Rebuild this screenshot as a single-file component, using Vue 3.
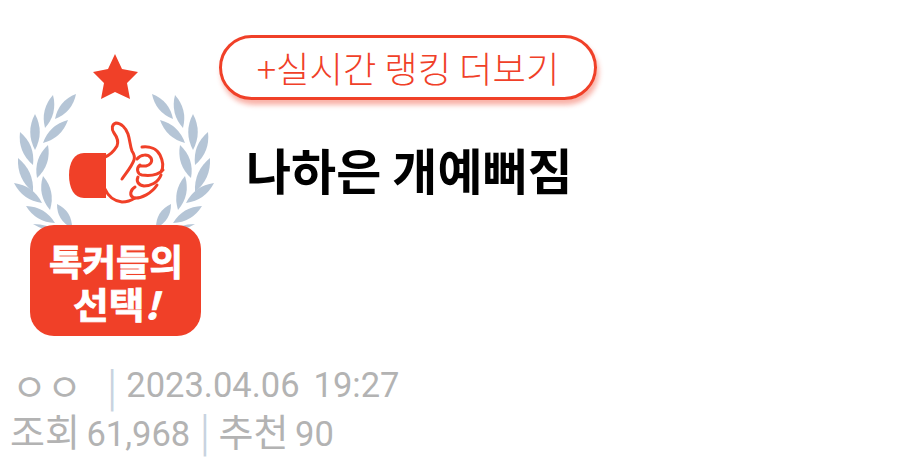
<script setup>
const leaves = [
  [76, 94, 55, 119, 9], [53, 95, 45, 128, 9], [68, 120, 43, 143, 9], [35, 114, 35, 150, 9.5],
  [48, 145, 37, 178, 9.5], [20, 132, 33, 165, 9.5], [18, 158, 33, 192, 9.5], [43, 176, 50, 210, 9.5],
  [14, 183, 42, 203, 9], [26, 206, 55, 223, 9], [57, 204, 72, 228, 9], [33, 224, 60, 232, 4],
]

function leafPath([ax, ay, bx, by, w]) {
  const mx = (ax + bx) / 2
  const my = (ay + by) / 2
  const dx = bx - ax
  const dy = by - ay
  const len = Math.hypot(dx, dy)
  const nx = (-dy / len) * w
  const ny = (dx / len) * w
  return `M${ax} ${ay}Q${mx + nx} ${my + ny} ${bx} ${by}Q${mx - nx} ${my - ny} ${ax} ${ay}Z`
}

const leafPaths = leaves.map(leafPath)
</script>

<template>
  <main class="page">
    <section class="top">
      <svg class="logo" width="215" height="340" viewBox="0 0 215 340" role="img" aria-label="톡커들의 선택!">
        <path class="fill" d="M115 54L122 69L138 72L127 83L130 99L115 92L101 99L104 83L93 72L108 69Z" />
        <g class="laurel">
          <path v-for="d in leafPaths" :key="d" :d="d" />
          <g transform="translate(228 0) scale(-1 1)">
            <path v-for="d in leafPaths" :key="d" :d="d" />
          </g>
        </g>
        <path class="fill" d="M106 153H84C74 153 69 163 69 175C69 188 74 198 84 198H106Z" />
        <g class="hand">
          <path d="M105 157C110 155 114 151 117 146C119 141 117 137 114 133C111 129 112 124 116 123C121 123 126 128 128 134C130 140 130 146 132 151C134 154 135 157 134 160C132 166 127 172 122 179" />
          <path d="M105 189C108 196 114 201 122 202C128 202 132 200 135 198" />
          <path d="M142 147C150 146 157 149 160 155C163 161 164 167 161 172" />
          <path d="M137 159C141 154 148 154 151 158C153 162 150 165 146 166L140 166" />
          <path d="M140 165C136 168 137 174 142 175C149 176 158 175 163 170" />
          <path d="M138 177C136 181 138 185 144 186C150 186 158 183 161 175" />
          <path d="M135 187C130 190 129 196 134 198C141 199 152 193 157 185" />
        </g>
        <rect class="fill" x="30" y="225" width="171" height="111" rx="24" />
        <text class="badge-text" x="116" y="276" textLength="134" lengthAdjust="spacingAndGlyphs">톡커들의</text>
        <text class="badge-text" x="116" y="319" textLength="86" lengthAdjust="spacingAndGlyphs">선택<tspan class="bang">!</tspan></text>
      </svg>

      <div class="side">
        <a class="more" href="#">+실시간 랭킹 더보기</a>
        <h1 class="title">나하은 개예뻐짐</h1>
      </div>
    </section>

    <section class="meta">
      <p class="line writer"><span class="name">ㅇㅇ</span><span class="divider">|</span><span>2023.04.06</span><span class="time">19:27</span></p>
      <p class="line stats"><span class="ko">조회</span> 61,968 <span class="pipe">|</span> <span class="ko">추천</span> 90</p>
    </section>
  </main>
</template>

<style scoped>
.page {
  width: 905px;
  height: 466px;
  overflow: hidden;
  background: #fff;
  font-family: "Noto Sans CJK KR", "Noto Sans", sans-serif;
}

.top {
  display: flex;
  height: 362px;
}

.logo {
  flex: none;
}

.fill {
  fill: #f04028;
}

.laurel {
  fill: #b5c5d6;
}

.hand {
  fill: none;
  stroke: #f04028;
  stroke-width: 3;
  stroke-linecap: round;
  stroke-linejoin: round;
}

.badge-text {
  fill: #fff;
  stroke: #fff;
  stroke-width: 0.8px;
  font-size: 36px;
  font-weight: 700;
  text-anchor: middle;
}

.bang {
  font-style: italic;
}

.side {
  display: flex;
  flex-direction: column;
  align-items: flex-start;
  padding-top: 35px;
  margin-left: 4px;
}

.more {
  box-sizing: border-box;
  width: 378px;
  height: 65px;
  border: 3px solid #f04028;
  border-radius: 33px;
  box-shadow: 2px 5px 5px rgba(240, 64, 40, 0.4);
  color: #f04028;
  font-size: 36.3px;
  font-weight: 300;
  line-height: 58px;
  text-align: center;
  text-decoration: none;
  white-space: nowrap;
}

.title {
  margin: 39px 0 0 27px;
  color: #000;
  font-size: 49px;
  font-weight: 700;
  line-height: 60px;
  white-space: nowrap;
}

.meta {
  color: #b3b3b3;
  font-size: 34.5px;
  font-family: Roboto, "Noto Sans CJK KR", sans-serif;
}

.line {
  margin: 0;
  line-height: 46px;
  height: 46px;
  white-space: nowrap;
}

.writer {
  display: flex;
  height: 45px;
  padding-left: 12px;
}

.name {
  width: 95px;
  font-family: "Noto Sans CJK KR", sans-serif;
  font-size: 38px;
}

.divider,
.pipe {
  color: #c8d3e0;
  font-family: "Noto Sans CJK KR", sans-serif;
  font-size: 38px;
}

.divider {
  margin-right: 9px;
}

.pipe {
  margin: 0 2px 0 3px;
}

.time {
  margin-left: 14px;
}

.stats {
  padding-left: 10px;
  word-spacing: -2px;
}

.ko {
  font-family: "Noto Sans CJK KR", sans-serif;
  font-size: 38px;
}
</style>
